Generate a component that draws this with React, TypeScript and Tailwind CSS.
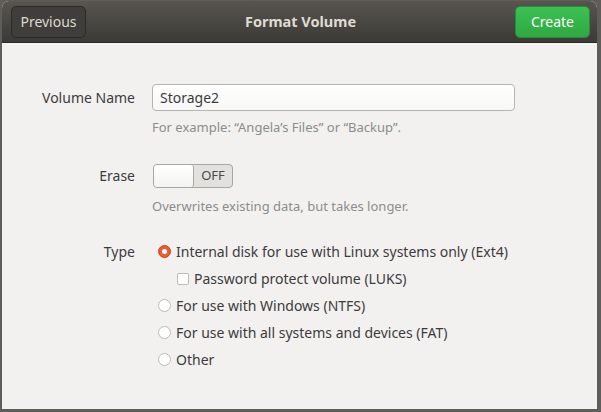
const font = { fontFamily: '"Noto Sans", "Open Sans", sans-serif' };

function Radio({ checked, label }: { checked?: boolean; label: string }) {
  return (
    <div className="flex items-center h-[27px]">
      {checked ? (
        <span className="w-[13px] h-[13px] rounded-full bg-[#e9602f] border border-[#c4481d] flex items-center justify-center">
          <span className="w-[5px] h-[5px] rounded-full bg-white" />
        </span>
      ) : (
        <span className="w-[13px] h-[13px] rounded-full bg-white border border-[#bdbbb6]" />
      )}
      <span className="ml-[5px] text-[#3c3c3c]">{label}</span>
    </div>
  );
}

export default function App() {
  return (
    <div className="w-[601px] h-[412px] bg-[#5f5d59] relative overflow-hidden" style={font}>
      <div className="absolute left-[2px] top-[1px] right-[4px] bottom-[3px] flex flex-col rounded-t-[7px] overflow-hidden bg-[#f2f1f0]">
        <div className="h-[42px] shrink-0 flex items-center justify-between pl-[9px] pr-[7px] bg-gradient-to-b from-[#58554f] to-[#3b3a36] border-b border-[#2a2925]">
          <button className="h-[32px] w-[75px] rounded-[5px] border border-[#2c2b28] bg-[#403e3a] text-[#dcd8cf] text-[14px]">
            Previous
          </button>
          <div className="text-[#dfdbd2] font-bold text-[14.5px]">Format Volume</div>
          <button className="h-[32px] w-[75px] rounded-[5px] border border-[#2a8a3a] bg-gradient-to-b from-[#3cc153] to-[#2fa842] text-white text-[14px]">
            Create
          </button>
        </div>
        <div className="flex-1 text-[14px] text-[#3c3c3c] pt-[41px]">
          <div className="flex items-center">
            <div className="w-[134px] text-right pr-[1px]">Volume Name</div>
            <div className="ml-[16px] w-[363px] h-[27px] rounded-[4px] border border-[#b6b5b0] bg-gradient-to-b from-white to-[#f7f7f6] flex items-center px-[7px]">
              Storage2
            </div>
          </div>
          <div className="ml-[150px] mt-[7px] text-[13px] text-[#8b8d8e]">
            For example: “Angela’s Files” or “Backup”.
          </div>
          <div className="flex items-center mt-[26px]">
            <div className="w-[134px] text-right pr-[1px]">Erase</div>
            <div className="ml-[17px] w-[80px] h-[24px] rounded-[4px] border border-[#a8a7a2] bg-[#e2e1de] flex overflow-hidden">
              <div className="w-[40px] h-full bg-gradient-to-b from-white to-[#f3f3f2] border-r border-[#a8a7a2] rounded-[3px]" />
              <div className="flex-1 flex items-center justify-center text-[13px] text-[#4a4a4a]">OFF</div>
            </div>
          </div>
          <div className="ml-[150px] mt-[9px] text-[13px] text-[#8b8d8e]">
            Overwrites existing data, but takes longer.
          </div>
          <div className="flex mt-[22px]">
            <div className="w-[134px] text-right pr-[1px] h-[27px] flex items-center justify-end">Type</div>
            <div className="ml-[22px] flex flex-col">
              <Radio checked label="Internal disk for use with Linux systems only (Ext4)" />
              <div className="flex items-center h-[27px] ml-[19px]">
                <span className="w-[12px] h-[12px] rounded-[2px] bg-white border border-[#bdbbb6]" />
                <span className="ml-[5px]">Password protect volume (LUKS)</span>
              </div>
              <Radio label="For use with Windows (NTFS)" />
              <Radio label="For use with all systems and devices (FAT)" />
              <Radio label="Other" />
            </div>
          </div>
        </div>
      </div>
    </div>
  );
}
